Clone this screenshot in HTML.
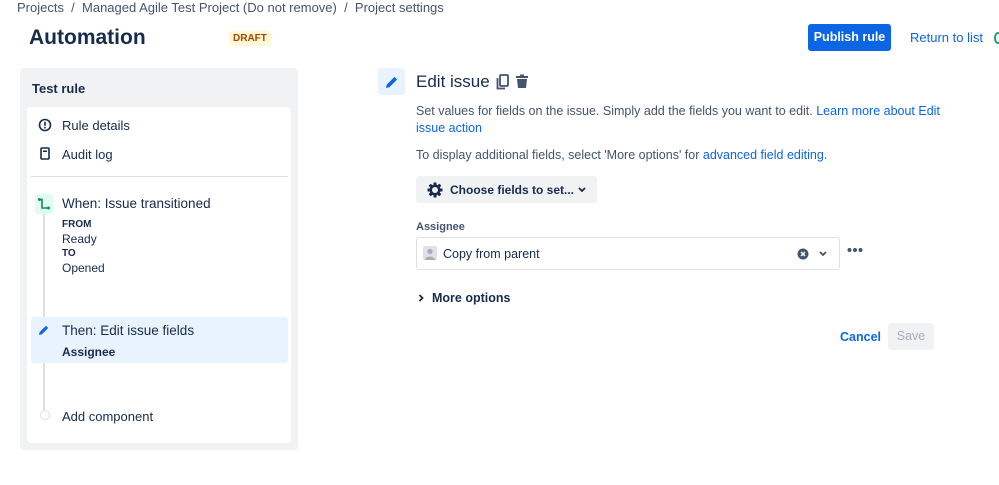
<!DOCTYPE html>
<html><head><style>
*{box-sizing:border-box;margin:0;padding:0}
body{width:999px;height:485px;overflow:hidden;background:#fff;font-family:"Liberation Sans",sans-serif;color:#172b4d;position:relative;font-size:13px}
.a{position:absolute;white-space:nowrap}
.link{color:#0c66e4}
</style></head><body>
<div class="a" style="left:17px;top:0;font-size:13px;color:#44546f">Projects &nbsp;/ &nbsp;Managed Agile Test Project (Do not remove) &nbsp;/ &nbsp;Project settings</div>
<div class="a" style="left:29px;top:26px;font-size:21px;font-weight:bold;color:#172b4d">Automation</div>
<div class="a" style="left:229px;top:31px;background:#fff7d6;color:#a54800;font-size:10px;font-weight:bold;padding:2px 4px;border-radius:3px">DRAFT</div>
<div class="a" style="left:808px;top:24px;width:83px;height:27px;background:#0c66e4;color:#fff;border-radius:3px;font-weight:bold;font-size:12.5px;line-height:27px;text-align:center">Publish rule</div>
<div class="a link" style="left:910px;top:30px;font-size:13px">Return to list</div>
<div class="a" style="left:994px;top:32px;width:8px;height:12px;border-radius:50%;border:2px solid #22a06b"></div>

<div class="a" style="left:20px;top:68px;width:278px;height:382px;background:#f1f2f4;border-radius:4px"></div>
<div class="a" style="left:32px;top:81px;font-size:13px;font-weight:bold">Test rule</div>
<div class="a" style="left:27px;top:107px;width:264px;height:336px;background:#fff;border-radius:4px"></div>
<svg class="a" style="left:38px;top:118px" width="14" height="14" viewBox="0 0 14 14"><circle cx="7" cy="7" r="5.5" fill="none" stroke="#172b4d" stroke-width="1.6"/><rect x="6.2" y="3.8" width="1.6" height="4" fill="#172b4d"/><rect x="6.2" y="8.8" width="1.6" height="1.6" fill="#172b4d"/></svg>
<div class="a" style="left:62px;top:118px">Rule details</div>
<svg class="a" style="left:40px;top:147px" width="10" height="13" viewBox="0 0 10 13"><rect x="1" y="1" width="8" height="11" rx="1" fill="none" stroke="#172b4d" stroke-width="1.6"/><rect x="3" y="3.5" width="4" height="1.5" fill="#172b4d"/></svg>
<div class="a" style="left:62px;top:147px">Audit log</div>
<div class="a" style="left:31px;top:176px;width:257px;height:1px;background:#dcdfe4"></div>
<div class="a" style="left:43px;top:210px;width:2px;height:200px;background:#dcdfe4"></div>
<div class="a" style="left:35px;top:194px;width:18px;height:20px;background:#dcfff1;border-radius:2px"></div>
<svg class="a" style="left:37px;top:197px" width="14" height="14" viewBox="0 0 14 14"><path d="M2.5 2.5 L5 2.5 L5 11 L11.5 11" fill="none" stroke="#1f845a" stroke-width="1.6"/><circle cx="2.5" cy="2.5" r="1.5" fill="#1f845a"/><circle cx="11.5" cy="11" r="1.5" fill="#1f845a"/></svg>
<div class="a" style="left:62px;top:196px;font-size:13.5px">When: Issue transitioned</div>
<div class="a" style="left:62px;top:219px;font-size:10px;font-weight:bold">FROM</div>
<div class="a" style="left:62px;top:232px;font-size:12px">Ready</div>
<div class="a" style="left:62px;top:248px;font-size:10px;font-weight:bold">TO</div>
<div class="a" style="left:62px;top:261px;font-size:12px">Opened</div>
<div class="a" style="left:31px;top:317px;width:257px;height:46px;background:#e9f2ff;border-radius:3px"></div>
<svg class="a" style="left:38px;top:324px" width="12" height="12" viewBox="0 0 12 12"><path d="M1 11 L1.6 8.2 L8 1.8 L10.2 4 L3.8 10.4 Z" fill="#0c66e4"/></svg>
<div class="a" style="left:62px;top:323px;font-size:13.5px">Then: Edit issue fields</div>
<div class="a" style="left:62px;top:345px;font-weight:bold;font-size:12px">Assignee</div>
<div class="a" style="left:40px;top:410px;width:10px;height:10px;border:1.5px solid #dcdfe4;border-radius:50%;background:#fff"></div>
<div class="a" style="left:62px;top:409px">Add component</div>

<div class="a" style="left:378px;top:68px;width:27px;height:27px;background:#e9f2ff;border-radius:3px"></div>
<svg class="a" style="left:385px;top:75px" width="14" height="14" viewBox="0 0 14 14"><path d="M1 13 L1.8 9.6 L9.5 1.9 L12.1 4.5 L4.4 12.2 Z" fill="#0c66e4"/></svg>
<div class="a" style="left:416px;top:72px;font-size:17px">Edit issue</div>
<svg class="a" style="left:496px;top:74px" width="13" height="16" viewBox="0 0 13 16"><rect x="4" y="1" width="8" height="11" rx="1" fill="none" stroke="#44546f" stroke-width="1.8"/><path d="M1.5 4 V14.5 H9" fill="none" stroke="#44546f" stroke-width="1.8"/></svg>
<svg class="a" style="left:515px;top:74px" width="14" height="15" viewBox="0 0 14 15"><rect x="1" y="2" width="12" height="2" fill="#44546f"/><rect x="5" y="0.5" width="4" height="2" fill="#44546f"/><path d="M2 5 H12 L11 14 H3 Z" fill="#44546f"/></svg>
<div class="a" style="left:416px;top:104px;font-size:12.5px;color:#44546f">Set values for fields on the issue. Simply add the fields you want to edit. <span class="link">Learn more about Edit</span></div>
<div class="a link" style="left:416px;top:121px;font-size:12.5px">issue action</div>
<div class="a" style="left:416px;top:148px;font-size:12.5px;color:#44546f">To display additional fields, select 'More options' for <span class="link">advanced field editing</span>.</div>
<div class="a" style="left:416px;top:176px;width:181px;height:27px;background:#f1f2f4;border-radius:3px"></div>
<svg class="a" style="left:427px;top:182px" width="16" height="16" viewBox="0 0 16 16"><g fill="#172b4d"><rect x="6.5" y="0.5" width="3" height="15" rx="0.5"/><rect x="6.5" y="0.5" width="3" height="15" rx="0.5" transform="rotate(45 8 8)"/><rect x="6.5" y="0.5" width="3" height="15" rx="0.5" transform="rotate(90 8 8)"/><rect x="6.5" y="0.5" width="3" height="15" rx="0.5" transform="rotate(135 8 8)"/><circle cx="8" cy="8" r="5.5"/></g><circle cx="8" cy="8" r="3" fill="#f1f2f4"/></svg>
<div class="a" style="left:450px;top:183px;font-weight:bold;font-size:12px">Choose fields to set...</div>
<svg class="a" style="left:577px;top:186px" width="10" height="8" viewBox="0 0 10 8"><path d="M2 2 L5 5 L8 2" fill="none" stroke="#172b4d" stroke-width="1.8"/></svg>
<div class="a" style="left:416px;top:221px;font-size:11px;font-weight:bold;color:#44546f">Assignee</div>
<div class="a" style="left:416px;top:237px;width:424px;height:33px;border:1.5px solid #dcdfe4;border-radius:3px"></div>
<svg class="a" style="left:423px;top:246px" width="14" height="14" viewBox="0 0 14 14"><rect width="14" height="14" rx="2" fill="#dfe1e6"/><circle cx="7" cy="5.5" r="2.6" fill="#a5adba"/><path d="M2 14 C2 9.5 12 9.5 12 14 Z" fill="#a5adba"/></svg>
<div class="a" style="left:443px;top:247px;font-size:12.5px">Copy from parent</div>
<svg class="a" style="left:797px;top:248px" width="12" height="12" viewBox="0 0 12 12"><circle cx="6" cy="6" r="5.5" fill="#44546f"/><path d="M4 4 L8 8 M8 4 L4 8" stroke="#fff" stroke-width="1.5"/></svg>
<svg class="a" style="left:818px;top:250px" width="10" height="8" viewBox="0 0 10 8"><path d="M2 2 L5 5 L8 2" fill="none" stroke="#44546f" stroke-width="1.8"/></svg>
<svg class="a" style="left:847px;top:247px" width="16" height="6" viewBox="0 0 16 6"><circle cx="2.5" cy="3" r="2" fill="#44546f"/><circle cx="8" cy="3" r="2" fill="#44546f"/><circle cx="13.5" cy="3" r="2" fill="#44546f"/></svg>
<svg class="a" style="left:417px;top:293px" width="8" height="10" viewBox="0 0 8 10"><path d="M2.5 2 L5.5 5 L2.5 8" fill="none" stroke="#172b4d" stroke-width="1.8"/></svg>
<div class="a" style="left:432px;top:291px;font-size:12.5px;font-weight:bold">More options</div>
<div class="a link" style="left:840px;top:330px;font-size:12.5px;font-weight:bold">Cancel</div>
<div class="a" style="left:888px;top:323px;width:46px;height:27px;background:#f1f2f4;border-radius:3px;color:#a5adba;font-size:12.5px;line-height:27px;text-align:center">Save</div>
</body></html>
